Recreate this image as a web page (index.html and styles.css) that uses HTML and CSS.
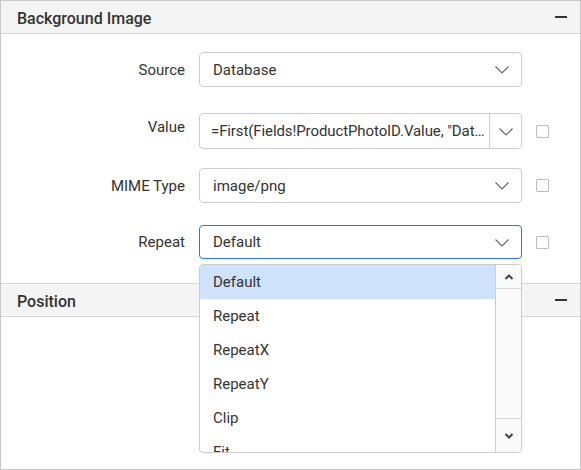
FILE: index.html
```html
<!DOCTYPE html>
<html lang="en">
<head>
  <meta charset="UTF-8">
  <meta name="viewport" content="width=device-width, initial-scale=1.0">
  <title>Background Image</title>
  <link rel="stylesheet" href="styles.css">
</head>
<body>
  <div class="panel">
    <div class="section-header">
      <span class="section-title">Background Image</span>
      <span class="collapse"></span>
    </div>

    <div class="section-body">
      <div class="row row-source">
        <label class="row-label">Source</label>
        <div class="dropdown">
          <span class="dropdown-text">Database</span>
          <span class="chevron">
            <svg width="14" height="8" viewBox="0 0 14 8"><path d="M0.5 0.5 L7 7 L13.5 0.5" fill="none" stroke="#666" stroke-width="1.2"/></svg>
          </span>
        </div>
        <span></span>
      </div>

      <div class="row row-value">
        <label class="row-label label-top">Value</label>
        <div class="dropdown dropdown-split">
          <span class="dropdown-text">=First(Fields!ProductPhotoID.Value, "DataSet1")</span>
          <span class="chevron chevron-split">
            <svg width="14" height="8" viewBox="0 0 14 8"><path d="M0.5 0.5 L7 7 L13.5 0.5" fill="none" stroke="#666" stroke-width="1.2"/></svg>
          </span>
        </div>
        <span class="checkbox"></span>
      </div>

      <div class="row row-mime">
        <label class="row-label">MIME Type</label>
        <div class="dropdown">
          <span class="dropdown-text">image/png</span>
          <span class="chevron">
            <svg width="14" height="8" viewBox="0 0 14 8"><path d="M0.5 0.5 L7 7 L13.5 0.5" fill="none" stroke="#666" stroke-width="1.2"/></svg>
          </span>
        </div>
        <span class="checkbox"></span>
      </div>

      <div class="row row-repeat">
        <label class="row-label">Repeat</label>
        <div class="dropdown dropdown-focus">
          <span class="dropdown-text">Default</span>
          <span class="chevron">
            <svg width="14" height="8" viewBox="0 0 14 8"><path d="M0.5 0.5 L7 7 L13.5 0.5" fill="none" stroke="#666" stroke-width="1.2"/></svg>
          </span>

          <div class="popup">
            <ul class="popup-list">
              <li class="selected">Default</li>
              <li>Repeat</li>
              <li>RepeatX</li>
              <li>RepeatY</li>
              <li>Clip</li>
              <li>Fit</li>
            </ul>
            <div class="scrollbar">
              <span class="scroll-btn scroll-up">
                <svg width="10" height="6" viewBox="0 0 10 6"><path d="M1.5 5 L5 1.5 L8.5 5" fill="none" stroke="#444" stroke-width="2"/></svg>
              </span>
              <span class="scroll-track"></span>
              <span class="scroll-btn scroll-down">
                <svg width="10" height="6" viewBox="0 0 10 6"><path d="M1.5 1 L5 4.5 L8.5 1" fill="none" stroke="#444" stroke-width="2"/></svg>
              </span>
            </div>
          </div>
        </div>
        <span class="checkbox"></span>
      </div>
    </div>

    <div class="section-header">
      <span class="section-title">Position</span>
      <span class="collapse"></span>
    </div>
  </div>
</body>
</html>
```

FILE: styles.css
```css
body {
  margin: 0;
  font-family: Roboto, "Liberation Sans", Arial, sans-serif;
  color: #333;
}

.panel {
  width: 581px;
  height: 470px;
  box-sizing: border-box;
  border: 1px solid #c8c8c8;
  background-color: #fff;
}

.section-header {
  height: 32px;
  background-color: #f4f4f4;
  border-bottom: 1px solid #d6d6d6;
  display: flex;
  align-items: center;
  justify-content: space-between;
  padding: 0 13px 0 16px;
}

.section-title {
  font-size: 16px;
  font-weight: 500;
  color: #333;
  padding-top: 2px;
}

.collapse {
  width: 12px;
  height: 2px;
  background-color: #333;
}

.section-body {
  padding: 18px 0 24px;
  border-bottom: 1px solid #d6d6d6;
}

.row {
  display: grid;
  grid-template-columns: 184px 323px 26px;
  column-gap: 14px;
  align-items: center;
}

.row-value {
  margin-top: 26px;
}

.row-mime {
  margin-top: 19px;
}

.row-repeat {
  margin-top: 22px;
}

.row-label {
  text-align: right;
  font-size: 15px;
  color: #333;
}

.label-top {
  align-self: start;
  padding-top: 5px;
}

.dropdown {
  position: relative;
  height: 35px;
  box-sizing: border-box;
  border: 1px solid #ccc;
  border-radius: 4px;
  display: flex;
  align-items: center;
  padding-left: 13px;
  font-size: 15px;
}

.row-value .dropdown {
  height: 36px;
  padding-left: 11px;
}

.row-value .dropdown-text {
  letter-spacing: -0.1px;
}

.row-repeat .dropdown {
  height: 34px;
}

.dropdown-focus {
  border-color: #2a73e8;
}

.dropdown-text {
  flex: 1;
  white-space: nowrap;
  overflow: hidden;
  text-overflow: ellipsis;
  min-width: 0;
}

.chevron {
  width: 38px;
  display: flex;
  justify-content: center;
  align-items: center;
  padding-top: 1px;
}

.chevron-split {
  width: 31px;
  align-self: stretch;
  border-left: 1px solid #ccc;
  margin-left: 1px;
}

.checkbox {
  width: 13px;
  height: 13px;
  box-sizing: border-box;
  border: 1px solid #bdbdbd;
  border-radius: 1px;
}

/* open list of the Repeat dropdown */
.popup {
  position: absolute;
  top: 38px;
  left: -1px;
  width: 323px;
  height: 189px;
  box-sizing: border-box;
  border: 1px solid #ccc;
  border-radius: 4px;
  background-color: #fff;
  display: flex;
  overflow: hidden;
  z-index: 2;
}

.popup-list {
  list-style: none;
  margin: 0;
  padding: 0;
  flex: 1;
  overflow: hidden;
}

.popup-list li {
  height: 34px;
  line-height: 34px;
  padding-left: 13px;
  font-size: 15px;
  color: #333;
}

.popup-list li.selected {
  background-color: #cfe2fc;
}

.scrollbar {
  width: 25px;
  border-left: 1px solid #ccc;
  background-color: #fafafa;
  display: flex;
  flex-direction: column;
}

.scroll-btn {
  display: flex;
  justify-content: center;
  align-items: center;
}

.scroll-up {
  height: 23px;
  border-bottom: 1px solid #d8d8d8;
}

.scroll-track {
  flex: 1;
}

.scroll-down {
  height: 33px;
  border-top: 1px solid #d8d8d8;
}
```
